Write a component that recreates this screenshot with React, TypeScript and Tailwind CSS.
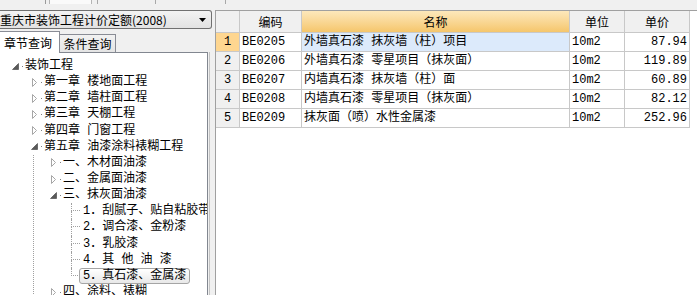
import React from "react";

const mono = "font-['Liberation_Mono','Noto_Sans_CJK_SC',monospace]";
const cjk = "font-['Noto_Sans_CJK_SC',sans-serif]";

const rows = [
  ["1", "BE0205", "外墙真石漆 抹灰墙（柱）项目", "10m2", "87.94"],
  ["2", "BE0206", "外墙真石漆 零星项目（抹灰面）", "10m2", "119.89"],
  ["3", "BE0207", "内墙真石漆 抹灰墙（柱）面", "10m2", "60.89"],
  ["4", "BE0208", "内墙真石漆 零星项目（抹灰面）", "10m2", "82.12"],
  ["5", "BE0209", "抹灰面（喷）水性金属漆", "10m2", "252.96"],
];

function Closed() {
  return (
    <svg width="6" height="9" viewBox="0 0 6 9" className="shrink-0">
      <polygon points="0.5,0.5 4.5,4.5 0.5,8.5" fill="#fff" stroke="#a6a6a6" />
    </svg>
  );
}

function Open() {
  return (
    <svg width="7" height="7" viewBox="0 0 7 7" className="shrink-0">
      <polygon points="6.5,0.5 6.5,6.5 0.5,6.5" fill="#595959" stroke="#3f3f3f" strokeWidth="0.6" />
    </svg>
  );
}

function Item({ pad, box, icon, text }: { pad: string; box: string; icon: React.ReactNode; text: string }) {
  return (
    <div className={`flex items-center h-[16.15px] ${pad}`}>
      <span className={`flex items-center h-full shrink-0 ${box}`}>
        {icon}
        <span className="ml-auto mr-[2px] w-px h-px bg-[#808080]" />
      </span>
      <span className="whitespace-pre">{text}</span>
    </div>
  );
}

function Leaf({ text, last, selected }: { text: string; last?: boolean; selected?: boolean }) {
  return (
    <div className="flex items-center h-[16.15px] pl-[37px]">
      <span className="flex flex-col w-[12px] h-full shrink-0">
        <span className="h-[8px] w-[9px] border-l border-b border-dotted border-[#a0a0a0]" />
        <span className={last ? "flex-1" : "flex-1 border-l border-dotted border-[#a0a0a0]"} />
      </span>
      {selected ? (
        <span className="-ml-[4px] h-[16px] px-[3px] flex items-center whitespace-pre border border-[#a5a5a5] rounded-[3px] bg-linear-to-b from-white to-[#e8e8e8]">
          {text}
        </span>
      ) : (
        <span className="whitespace-pre">{text}</span>
      )}
    </div>
  );
}

export default function App() {
  return (
    <div className="w-[697px] h-[295px] bg-[#f0f0f0] overflow-hidden flex flex-col text-[12px] text-black">
      {/* leftover toolbar edge */}
      <div className="h-[10px] shrink-0">
        <div className="flex h-[4px]">
          <div className="w-[45px]" />
          <div className="w-[4px] border-l border-[#9a9a9a]" />
          <div className="w-[42px] border-l border-[#b4b4b4] bg-[#fafafa]" />
          <div className="w-[6px] border-l border-[#b4b4b4]" />
          <div className="w-[58px] border-l border-[#a8a8a8]" />
          <div className="w-[70px] border-l border-[#a8a8a8]" />
          <div className="w-[10px] border-l border-[#a8a8a8]" />
        </div>
      </div>

      <div className="flex flex-1 min-h-0">
        {/* left: quota selector + chapter tree */}
        <div className="w-[212px] shrink-0 flex flex-col">
          <div className={`h-[19px] flex items-center border border-l-0 border-[#707070] rounded-r-[3px] bg-linear-to-b from-[#f3f3f3] to-[#e2e2e2] leading-[14px] ${cjk}`}>
            <span className="whitespace-pre">重庆市装饰工程计价定额(2008)</span>
            <svg width="7" height="4" viewBox="0 0 7 4" className="ml-auto mr-[5px]">
              <polygon points="0,0 7,0 3.5,4" fill="#000" />
            </svg>
          </div>

          <div className="flex flex-1 min-h-0 mt-[2px]">
            <div className="w-[208px] flex flex-col">
              <div className={`flex items-end h-[21px] leading-[14px] ${cjk}`}>
                <div className="relative z-10 w-[60px] h-[22px] -mb-[1px] pl-[4px] flex items-center bg-white border-t border-r border-[#898c95]">
                  章节查询
                </div>
                <div className="w-[56px] h-[18px] flex items-center justify-center bg-linear-to-b from-[#f2f2f2] to-[#e4e4e4] border-t border-r border-[#898c95]">
                  条件查询
                </div>
              </div>

              <div className={`flex-1 min-h-0 overflow-hidden bg-white border-t border-r border-[#828790] pt-[5px] leading-[14px] ${mono}`}>
                <Item pad="pl-[12px]" box="w-[13px]" icon={<Open />} text="装饰工程" />
                <Item pad="pl-[32px]" box="w-[12px]" icon={<Closed />} text="第一章 楼地面工程" />
                <Item pad="pl-[32px]" box="w-[12px]" icon={<Closed />} text="第二章 墙柱面工程" />
                <Item pad="pl-[32px]" box="w-[12px]" icon={<Closed />} text="第三章 天棚工程" />
                <Item pad="pl-[32px]" box="w-[12px]" icon={<Closed />} text="第四章 门窗工程" />
                <Item pad="pl-[31px]" box="w-[13px]" icon={<Open />} text="第五章 油漆涂料裱糊工程" />
                <div className="ml-[33px] border-l border-dotted border-[#a0a0a0]">
                  <Item pad="pl-[17px]" box="w-[12px]" icon={<Closed />} text="一、木材面油漆" />
                  <Item pad="pl-[17px]" box="w-[12px]" icon={<Closed />} text="二、金属面油漆" />
                  <Item pad="pl-[16px]" box="w-[13px]" icon={<Open />} text="三、抹灰面油漆" />
                  <Leaf text="1．刮腻子、贴自粘胶带" />
                  <Leaf text="2．调合漆、金粉漆" />
                  <Leaf text="3．乳胶漆" />
                  <Leaf text="4．其 他 油 漆" />
                  <Leaf text="5．真石漆、金属漆" last selected />
                  <Item pad="pl-[17px]" box="w-[12px]" icon={<Closed />} text="四、涂料、裱糊" />
                </div>
              </div>
            </div>
            <div className="ml-[1px] mt-[21px] w-px bg-[#c4c4c4]" />
          </div>
        </div>

        <div className="w-[3px] shrink-0" />

        {/* right: quota item grid */}
        <div className="flex-1 bg-white border-l border-t border-[#a0a0a0] leading-[14px]">
          <div className={`flex h-[22px] w-[474px] border-b border-[#c8c8c8] bg-[#f0f0f0] ${cjk}`}>
            <div className="w-[24px] border-r border-[#c8c8c8]" />
            <div className="w-[62px] border-r border-[#c8c8c8] flex items-center justify-center">编码</div>
            <div className="w-[268px] border-r border-[#c8c8c8] flex items-center justify-center bg-linear-to-b from-[#fde8bb] to-[#f5c66b]">
              名称
            </div>
            <div className="w-[55px] border-r border-[#c8c8c8] flex items-center justify-center">单位</div>
            <div className="w-[65px] border-r border-[#c8c8c8] flex items-center justify-center">单价</div>
          </div>
          {rows.map(([no, code, name, unit, price], i) => (
            <div key={no} className={`flex h-[19px] w-[474px] border-b border-[#c8c8c8] ${mono}`}>
              <div
                className={`w-[24px] border-r border-[#c8c8c8] flex items-center justify-center ${
                  i === 0 ? "bg-[#fed690]" : "bg-[#f0f0f0]"
                }`}
              >
                {no}
              </div>
              <div className="w-[62px] border-r border-[#c8c8c8] flex items-center pl-[2px]">{code}</div>
              <div
                className={`w-[268px] border-r border-[#c8c8c8] flex items-center pl-[2px] whitespace-pre ${
                  i === 0 ? "bg-[#dceafb]" : ""
                }`}
              >
                {name}
              </div>
              <div className="w-[55px] border-r border-[#c8c8c8] flex items-center pl-[2px]">{unit}</div>
              <div className="w-[65px] border-r border-[#c8c8c8] flex items-center justify-end pr-[2px]">{price}</div>
            </div>
          ))}
        </div>
      </div>
    </div>
  );
}
